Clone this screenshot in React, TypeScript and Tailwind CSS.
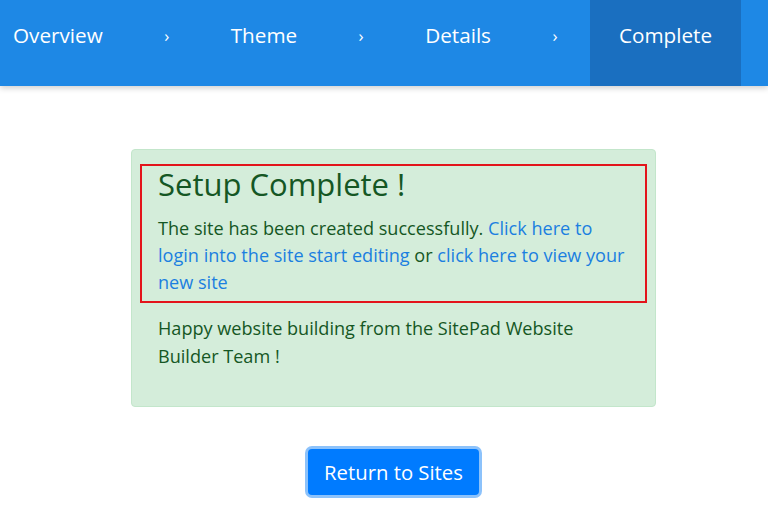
const steps = ["Overview", "Theme", "Details", "Complete"];

export default function App() {
  return (
    <div
      className="min-h-[505px] bg-white"
      style={{ fontFamily: '"Open Sans", "Liberation Sans", sans-serif' }}
    >
      {/* Wizard steps */}
      <div className="flex h-[86px] items-stretch bg-[#1e88e5] pl-[13px] text-[20.7px] leading-[31px] text-white shadow-[0_2px_6px_rgba(0,0,0,0.2)]">
        {steps.map((s, i) => (
          <div key={s} className="flex items-stretch">
            {i === steps.length - 1 ? (
              <div className="bg-[#1a6fc0] px-[29px] pt-[20px]">{s}</div>
            ) : (
              <>
                <div className={`pt-[20px] ${i === 0 ? "pr-[29px]" : "px-[29px]"}`}>{s}</div>
                <div className="w-[70px] pt-[20px] text-center text-[17px]">›</div>
              </>
            )}
          </div>
        ))}
      </div>

      <div className="flex flex-col items-center pl-[19px] pt-[63px]">
        {/* Success alert */}
        <div className="w-[525px] rounded-[4px] border border-[#c3e6cb] bg-[#d4edda] px-[8px] pb-[36px] pt-[14px] text-[#155724]">
          <div className="border-2 border-[#e3141b] px-[16px] pb-[5px]">
            <h3 className="mb-[12px] text-[31px] leading-[37px]">Setup Complete !</h3>
            <p className="text-[18.1px] leading-[27px]">
              The site has been created successfully.{" "}
              <a href="#" className="text-[#1b7fe0]">
                Click here to login into the site start editing
              </a>{" "}
              or{" "}
              <a href="#" className="text-[#1b7fe0]">
                click here to view your new site
              </a>
            </p>
          </div>
          <p className="mt-[11px] px-[18px] text-[18.1px] leading-[28px]">
            Happy website building from the SitePad Website Builder Team !
          </p>
        </div>

        <button className="mt-[42px] rounded-[4px] bg-[#007bff] px-[16px] py-[8px] text-[20.3px] leading-[30px] text-white ring-[3px] ring-[#8cc2fb]">
          Return to Sites
        </button>
      </div>
    </div>
  );
}
